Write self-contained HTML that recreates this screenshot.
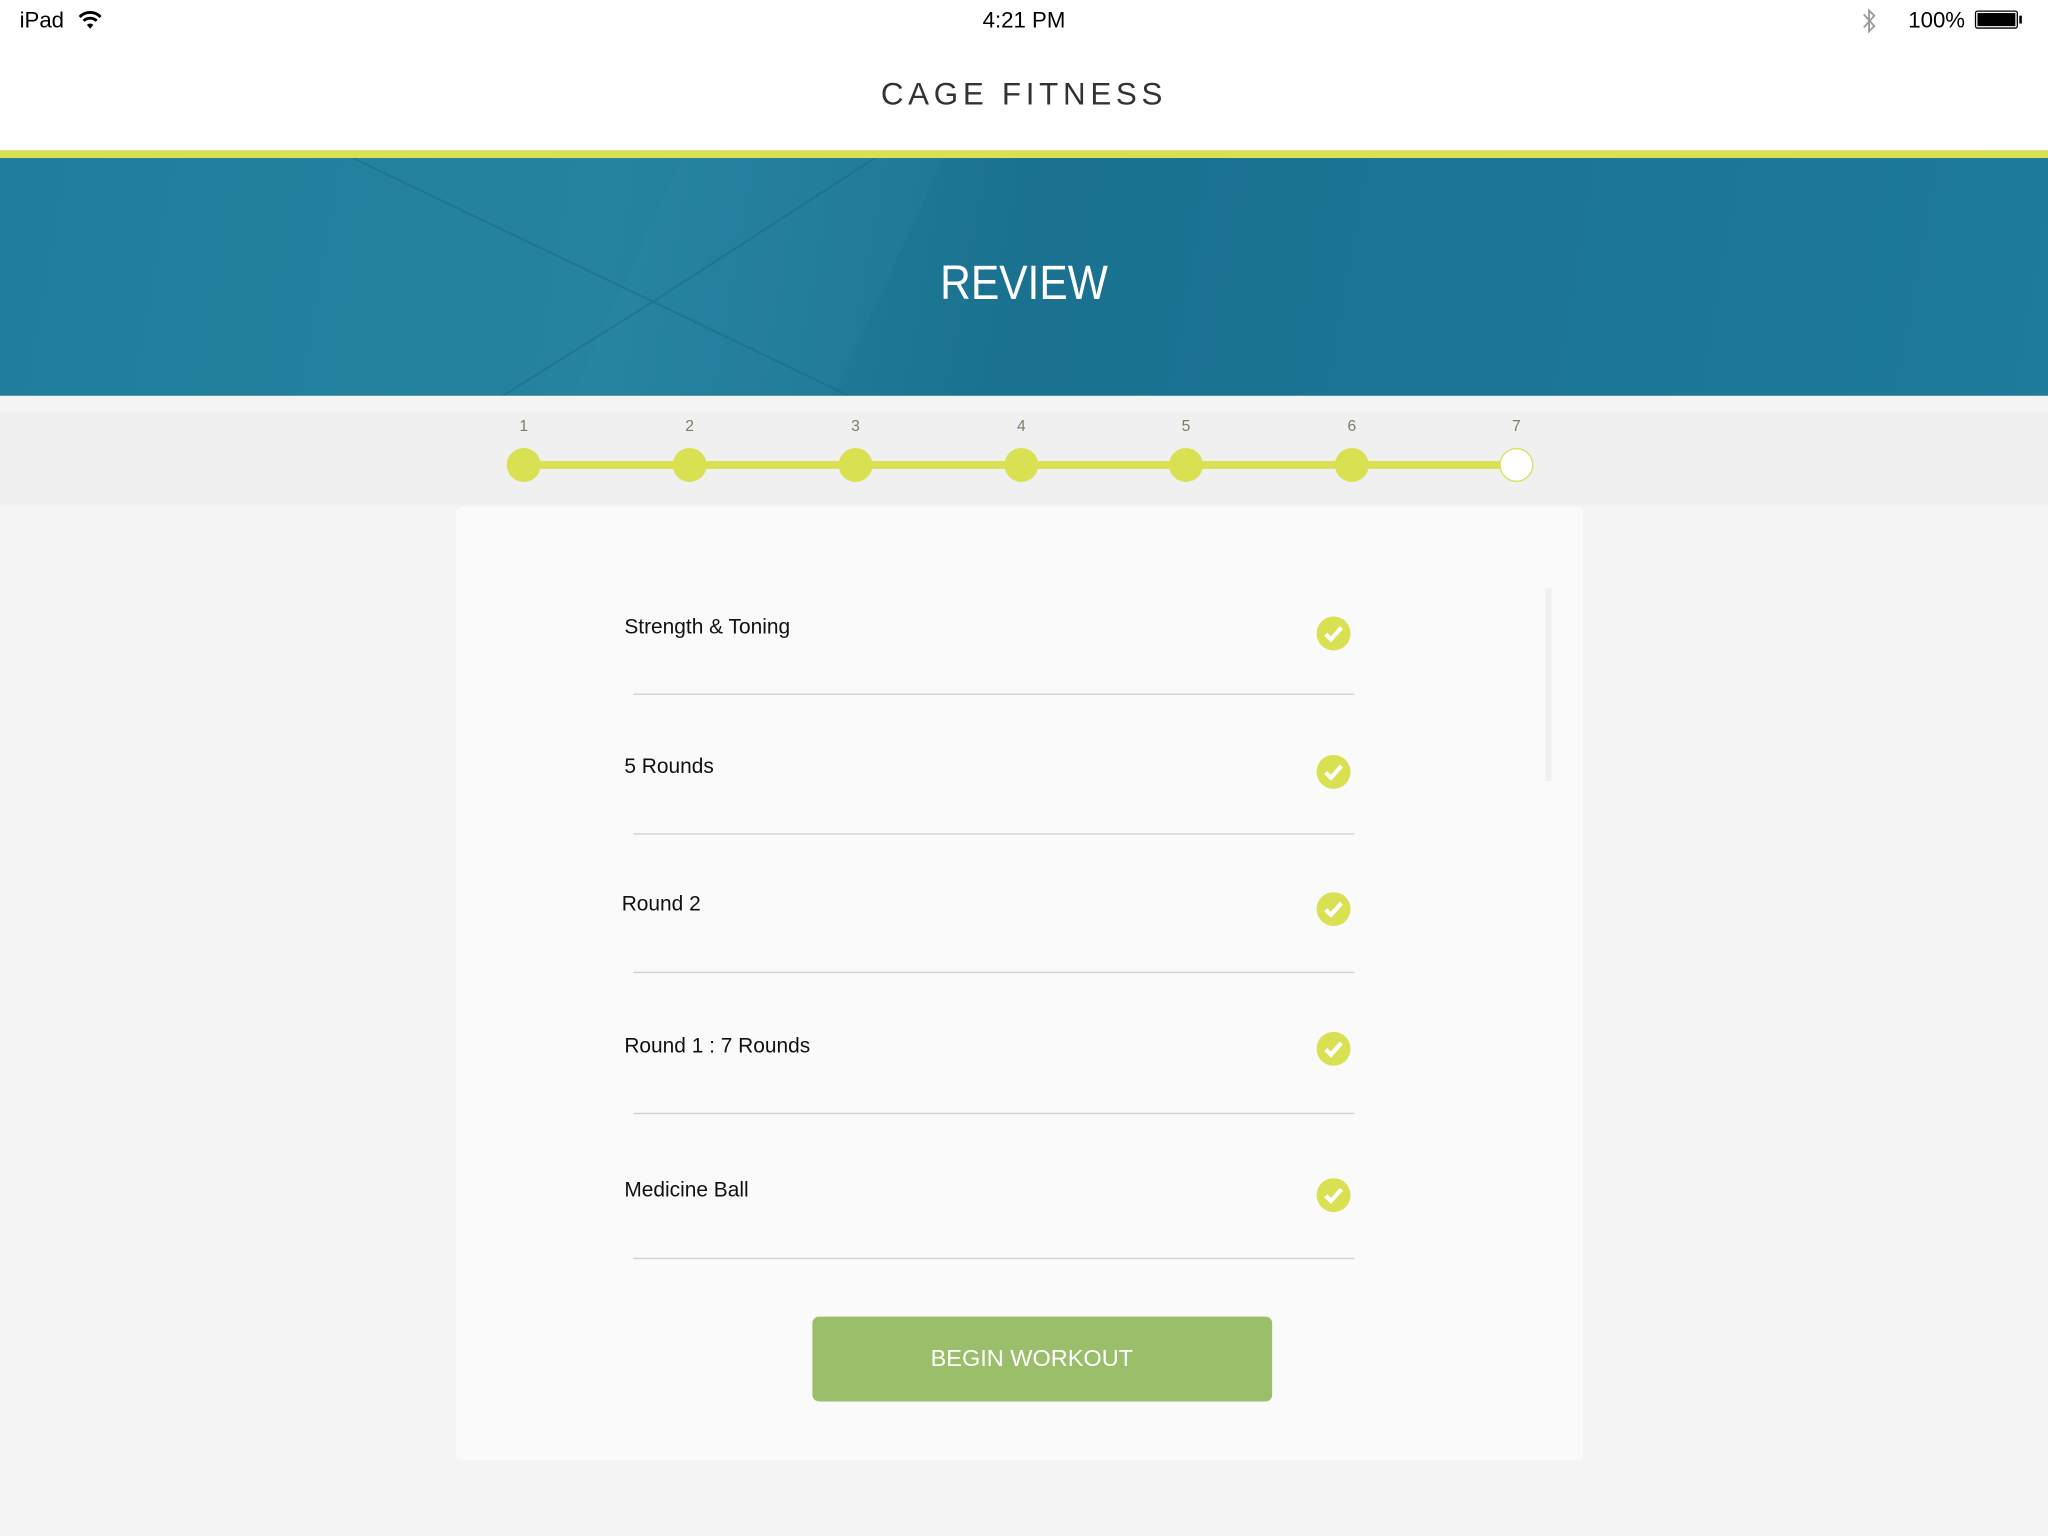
<!DOCTYPE html>
<html><head><meta charset="utf-8"><style>
html,body{margin:0;padding:0;width:2048px;height:1536px;overflow:hidden;background:#f4f4f4}
#w{position:absolute;left:0;top:0;width:1568px;height:1176px;transform:scale(1.306122);transform-origin:0 0;font-family:"Liberation Sans",sans-serif;background:#f4f4f4}
.a{position:absolute}
.num{position:absolute;top:319px;font-size:12px;color:#7a7f60;width:20px;text-align:center;margin-left:-10px}
.dot{position:absolute;top:343px;width:26px;height:26px;border-radius:50%;background:#d9e052;margin-left:-13px}
.row{position:absolute;left:478px;font-size:16px;color:#111}
.chk{position:absolute;left:1008px;width:26px;height:26px}
.sep{position:absolute;left:485px;width:552px;height:1px;background:#cfcfcf}
</style></head><body><div id="w">
<div class="a" style="left:0;top:0;width:1568px;height:115px;background:#fff"></div>
<div class="a" style="left:15px;top:6px;font-size:17px;color:#000">iPad</div>
<svg class="a" style="left:59px;top:6px" width="20" height="18" viewBox="0 0 20 18"><path d="M2 7a11 11 0 0 1 16 0" stroke="#000" stroke-width="2.2" fill="none"/><path d="M5 10a7 7 0 0 1 10 0" stroke="#000" stroke-width="2.2" fill="none"/><path d="M7.5 13a3.5 3.5 0 0 1 5 0L10 16z" fill="#000"/></svg>
<div class="a" style="left:0;width:1568px;top:6px;text-align:center;font-size:17px;color:#000">4:21 PM</div>
<svg class="a" style="left:1424px;top:5px" width="14" height="22" viewBox="0 0 14 22"><path d="M3 6l8 9-4 4V3l4 4-8 9" stroke="#999" stroke-width="1.4" fill="none"/></svg>
<div class="a" style="left:1461px;top:6px;font-size:17px;color:#000">100%</div>
<div class="a" style="left:1512px;top:8px;width:33px;height:14px;border:1px solid #000;border-radius:2px;padding:1px;box-sizing:border-box"><div style="width:100%;height:100%;background:#000"></div></div>
<div class="a" style="left:1546px;top:12px;width:2px;height:6px;background:#000"></div>
<div class="a" style="left:0;width:1568px;top:59px;text-align:center;font-size:24px;letter-spacing:3.6px;color:#333">CAGE FITNESS</div>
<div class="a" style="left:0;top:115px;width:1568px;height:6px;background:#d9e052"></div>
<div class="a" style="left:0;top:121px;width:1568px;height:182px;background:linear-gradient(100deg,#1f7e9c 0%,#25839f 30%,#1a7190 50%,#1c7595 75%,#1e7b9a 100%);overflow:hidden">
<div class="a" style="left:480px;top:0;width:200px;height:182px;background:rgba(60,150,180,.12);transform:skewX(-25deg)"></div>
<svg class="a" style="left:0;top:0" width="1568" height="182"><path d="M270 0L500 110 385 182M500 110L650 182M670 0L500 110" stroke="#176a86" stroke-width="1.5" fill="none" opacity=".5"/></svg>
</div>
<div class="a" style="left:0;width:1568px;top:196px;text-align:center;font-size:37px;color:#fff;transform:scaleX(0.88)">REVIEW</div>
<div class="a" style="left:0;top:315px;width:1568px;height:72px;background:#f0f0f0"></div>
<div class="a" style="left:401px;top:353px;width:760px;height:6px;background:#d9e052"></div>
<div class="num" style="left:401px">1</div><div class="num" style="left:528px">2</div><div class="num" style="left:655px">3</div><div class="num" style="left:782px">4</div><div class="num" style="left:908px">5</div><div class="num" style="left:1035px">6</div><div class="num" style="left:1161px">7</div>
<div class="dot" style="left:401px"></div><div class="dot" style="left:528px"></div><div class="dot" style="left:655px"></div><div class="dot" style="left:782px"></div><div class="dot" style="left:908px"></div><div class="dot" style="left:1035px"></div>
<div class="dot" style="left:1161px;background:#fff;border:1px solid #d9e052;box-sizing:border-box"></div>
<div class="a" style="left:349px;top:388px;width:863px;height:730px;background:#fafafa;border-radius:4px"></div>
<div class="a" style="left:1183px;top:450px;width:5px;height:148px;background:#f0f0f0"></div>
<div class="row" style="top:472px">Strength &amp; Toning</div>
<div class="row" style="top:579px">5 Rounds</div>
<div class="row" style="top:684px;left:476px">Round 2</div>
<div class="row" style="top:793px">Round 1 : 7 Rounds</div>
<div class="row" style="top:903px">Medicine Ball</div>
<svg class="chk" style="top:472px" viewBox="0 0 26 26"><circle cx="13" cy="13" r="13" fill="#d9e052"/><path d="M7 13.5l4 4 8-9" stroke="#fff" stroke-width="3.2" fill="none"/></svg>
<svg class="chk" style="top:578px" viewBox="0 0 26 26"><circle cx="13" cy="13" r="13" fill="#d9e052"/><path d="M7 13.5l4 4 8-9" stroke="#fff" stroke-width="3.2" fill="none"/></svg>
<svg class="chk" style="top:683px" viewBox="0 0 26 26"><circle cx="13" cy="13" r="13" fill="#d9e052"/><path d="M7 13.5l4 4 8-9" stroke="#fff" stroke-width="3.2" fill="none"/></svg>
<svg class="chk" style="top:790px" viewBox="0 0 26 26"><circle cx="13" cy="13" r="13" fill="#d9e052"/><path d="M7 13.5l4 4 8-9" stroke="#fff" stroke-width="3.2" fill="none"/></svg>
<svg class="chk" style="top:902px" viewBox="0 0 26 26"><circle cx="13" cy="13" r="13" fill="#d9e052"/><path d="M7 13.5l4 4 8-9" stroke="#fff" stroke-width="3.2" fill="none"/></svg>
<div class="sep" style="top:531px"></div><div class="sep" style="top:638px"></div><div class="sep" style="top:744px"></div><div class="sep" style="top:852px"></div><div class="sep" style="top:963px"></div>
<div class="a" style="left:622px;top:1008px;width:352px;height:65px;background:#9bbe6b;border-radius:5px"></div>
<div class="a" style="left:614px;top:1008px;width:352px;height:65px;color:#fff;font-size:18px;text-align:center;line-height:65px">BEGIN WORKOUT</div>
</div></body></html>
